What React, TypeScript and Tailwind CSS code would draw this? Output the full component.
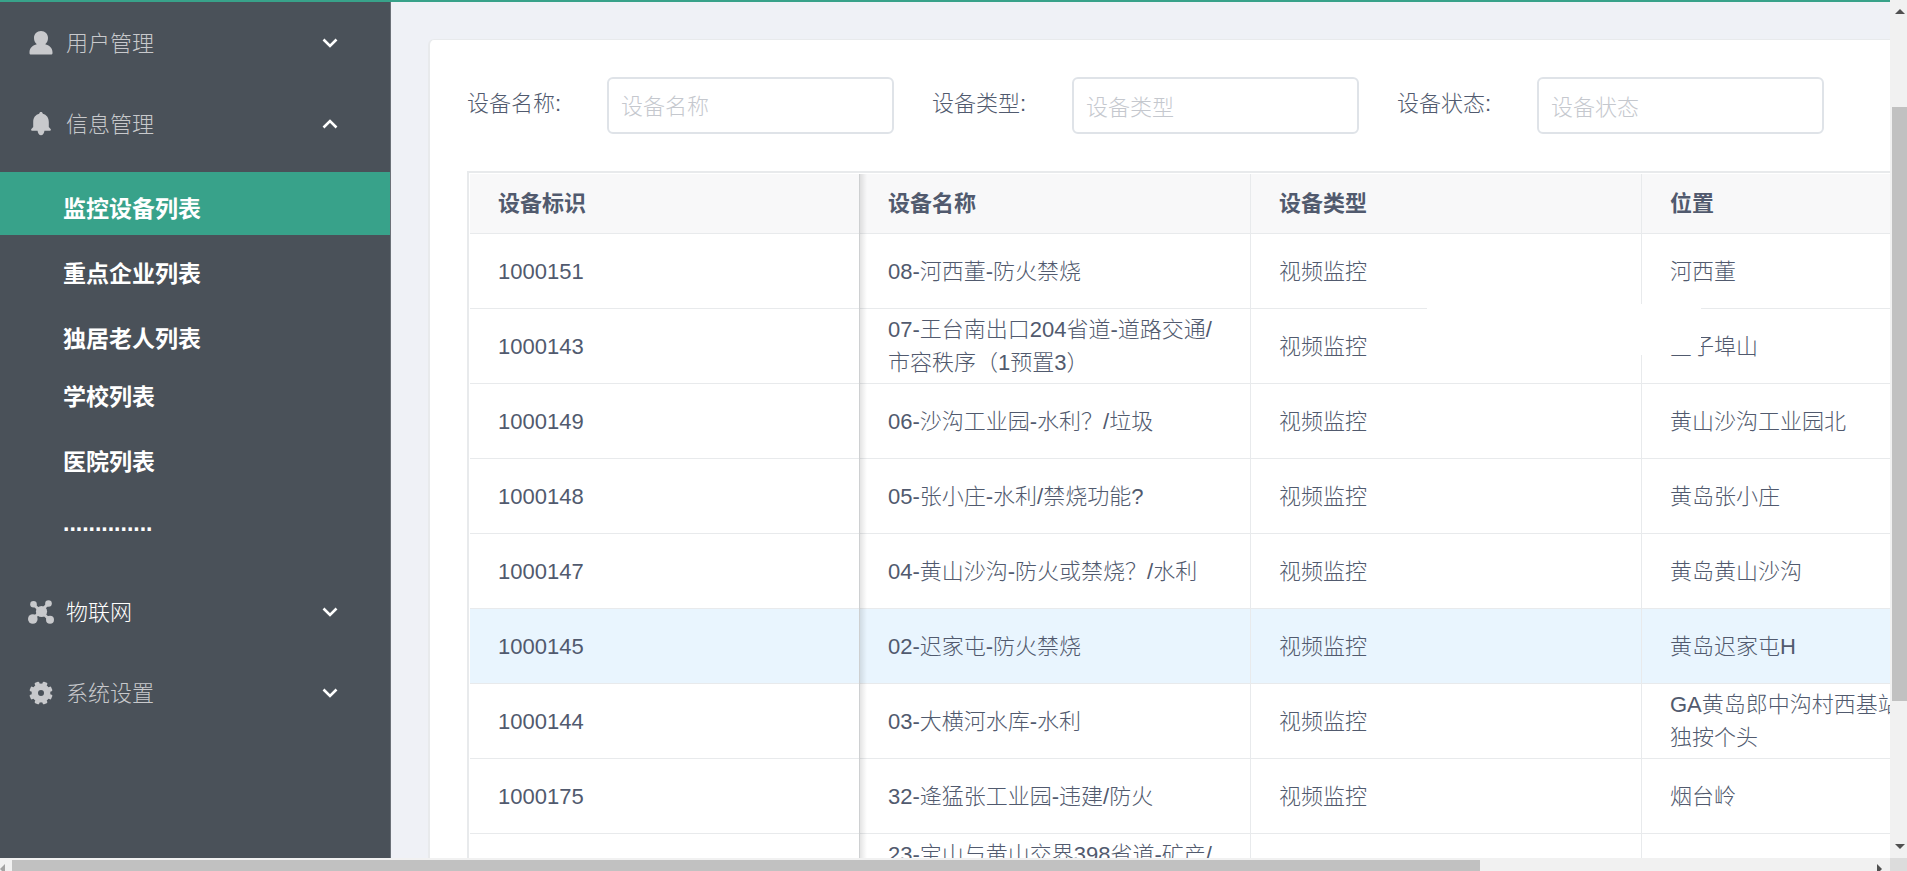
import React from 'react';

interface Device {
  id: string;
  name: string;
  type: string;
  location: string;
}

const devices: Device[] = [
  { id: '1000151', name: '08-河西董-防火禁烧', type: '视频监控', location: '河西董' },
  { id: '1000143', name: '07-王台南出口204省道-道路交通/市容秩序（1预置3）', type: '视频监控', location: '豆子埠山' },
  { id: '1000149', name: '06-沙沟工业园-水利？/垃圾', type: '视频监控', location: '黄山沙沟工业园北' },
  { id: '1000148', name: '05-张小庄-水利/禁烧功能?', type: '视频监控', location: '黄岛张小庄' },
  { id: '1000147', name: '04-黄山沙沟-防火或禁烧？/水利', type: '视频监控', location: '黄岛黄山沙沟' },
  { id: '1000145', name: '02-迟家屯-防火禁烧', type: '视频监控', location: '黄岛迟家屯H' },
  { id: '1000144', name: '03-大横河水库-水利', type: '视频监控', location: 'GA黄岛郎中沟村西基站\n独按个头' },
  { id: '1000175', name: '32-逄猛张工业园-违建/防火', type: '视频监控', location: '烟台岭' },
  { id: '', name: '23-宝山与黄山交界398省道-矿产/\n防火', type: '', location: '' },
];

const columns = ['设备标识', '设备名称', '设备类型', '位置'];

const subItems = [
  { label: '监控设备列表', className: 'h-[63px] pt-3 bg-[#38a28a]' },
  { label: '重点企业列表', className: 'h-[63px] pt-3' },
  { label: '独居老人列表', className: 'h-[63px] pt-3' },
  { label: '学校列表', className: 'h-14 pt-1' },
  { label: '医院列表', className: 'h-[63px] pt-3' },
  { label: '..............', className: 'h-[63px] pt-1' },
];

const filters = [
  { id: 'device-name', label: '设备名称', className: 'pt-0.5' },
  { id: 'device-type', label: '设备类型', className: 'pt-1' },
  { id: 'device-status', label: '设备状态', className: 'pt-1' },
];

const fixedShadow =
  "relative after:content-[''] after:absolute after:left-full after:top-0 after:-bottom-px after:w-2 after:bg-linear-to-r after:from-black/12 after:to-transparent";

const UserIcon = () => (
  <svg viewBox="0 0 24 24" className="w-6 h-6 shrink-0" fill="currentColor">
    <path d="M12 0c4.100 0 7 3 7 7 0 2.800-1.200 5-2.800 6.200 3.900 1.200 7.300 3.400 7.300 8V22c0 1-.6 1.500-1.500 1.500H2c-.9 0-1.500-.5-1.500-1.500v-.8c0-4.600 3.400-6.800 7.300-8C6.200 12 5 9.800 5 7c0-4 2.900-7 7-7z" />
  </svg>
);

const BellIcon = () => (
  <svg viewBox="0 0 24 24" className="w-6 h-6 shrink-0" fill="currentColor">
    <path d="M12 0c1 0 1.600.7 1.800 1.700 3.700.9 6 4 6 8.300v5l1.800 2.100c.6.700.3 1.600-.6 1.600H3c-.9 0-1.200-.9-.6-1.600L4.200 15v-5c0-4.300 2.300-7.400 6-8.300C10.400.7 11 0 12 0zM8.500 18.500h7c-.4 3-1.700 4.800-3.500 4.800s-3.100-1.800-3.500-4.800z" />
  </svg>
);

const NodesIcon = () => (
  <svg viewBox="0 0 26 24" className="w-[26px] h-6 shrink-0" fill="currentColor">
    <path d="M5.500 4.500L22 20M20.500 3.500L4.800 19" stroke="currentColor" strokeWidth="3" />
    <circle cx="13.500" cy="11.500" r="5.600" />
    <circle cx="5.500" cy="4.300" r="3.300" />
    <circle cx="20.500" cy="3.500" r="3.300" />
    <circle cx="4.800" cy="19" r="4.800" />
    <circle cx="22" cy="19.800" r="4" />
  </svg>
);

const GearIcon = () => (
  <svg viewBox="0 0 24 24" className="w-6 h-6 shrink-0">
    <circle cx="12" cy="12" r="6.200" fill="none" stroke="currentColor" strokeWidth="6.400" />
    {[22.5, 67.5, 112.5, 157.5, 202.5, 247.5, 292.5, 337.5].map((angle) => (
      <rect key={angle} x="9.600" y="0.400" width="4.800" height="5" rx="1" fill="currentColor" transform={`rotate(${angle} 12 12)`} />
    ))}
  </svg>
);

const Arrow: React.FC<{ up?: boolean }> = ({ up }) => (
  <svg viewBox="0 0 16 10" className="w-4 h-[10px] shrink-0 text-white" fill="none" stroke="currentColor" strokeWidth="2.600">
    <path d={up ? 'M1.500 8.500L8 2l6.500 6.500' : 'M1.500 1.500L8 8l6.500-6.500'} />
  </svg>
);

const MenuButton: React.FC<{ icon: React.ReactNode; label: string; open?: boolean; bright?: boolean }> = ({
  icon,
  label,
  open,
  bright,
}) => (
  <button
    type="button"
    className={`flex items-center w-full h-[81px] pl-7 pr-[52px] text-[22px] font-light ${bright ? 'text-white' : 'text-[#c8c9cc]'}`}
  >
    <span className="flex justify-center w-[26px] mr-3 text-[#c8c9cc]">{icon}</span>
    <span className="flex-1 pt-0.5 text-left">{label}</span>
    <Arrow up={open} />
  </button>
);

const Sidebar = () => (
  <nav className="w-[391px] shrink-0 bg-[#4a5159] border-r border-[#6b7178]">
    <MenuButton icon={<UserIcon />} label="用户管理" />
    <MenuButton icon={<BellIcon />} label="信息管理" open />
    <ul className="flex flex-col gap-0.5 mt-2 mb-[18px]">
      {subItems.map((item) => (
        <li key={item.label}>
          <a href="#" className={`flex items-center pl-[63px] text-[23px] font-bold text-white ${item.className}`}>
            {item.label}
          </a>
        </li>
      ))}
    </ul>
    <MenuButton icon={<NodesIcon />} label="物联网" bright />
    <MenuButton icon={<GearIcon />} label="系统设置" />
  </nav>
);

const Filters = () => (
  <form className="flex items-center gap-[38px]">
    {filters.map((f) => (
      <div key={f.id} className="flex items-center">
        <label htmlFor={f.id} className="w-[140px] pb-1 text-[22px] font-light">
          {f.label}:
        </label>
        <input
          id={f.id}
          type="text"
          placeholder={f.label}
          className={`w-[287px] h-[57px] px-3 text-[22px] font-light border-2 border-[#dfe3e8] rounded-md placeholder:text-[#c5c8ce] ${f.className}`}
        />
      </div>
    ))}
  </form>
);

const DeviceTable = () => (
  <div className="relative mt-[37px] border-l-2 border-t-2 border-[#e8eaec] pl-px pt-px">
    <table className="w-[1954px] table-fixed border-separate border-spacing-0 text-[22px]">
      <colgroup>
        <col className="w-[390px]" />
        <col className="w-[391px]" />
        <col className="w-[391px]" />
        <col className="w-[391px]" />
        <col className="w-[391px]" />
      </colgroup>
      <thead>
        <tr className="h-[60px] bg-[#f8f8f9]">
          {columns.map((c, i) => (
            <th key={c} className={`px-7 text-left font-bold border-r border-b border-[#e8eaec] ${i === 0 ? fixedShadow : ''}`}>
              {c}
            </th>
          ))}
          <th className="border-b border-[#e8eaec]" />
        </tr>
      </thead>
      <tbody>
        {devices.map((d) => (
          <tr key={d.name} className={`h-[75px] leading-[33px] font-light ${d.id === '1000145' ? 'bg-[#e9f5fe]' : 'bg-white'}`}>
            <td className={`px-7 border-r border-b border-[#e8eaec] ${fixedShadow}`}>{d.id}</td>
            <td className="px-7 border-r border-b border-[#e8eaec] whitespace-pre-line">{d.name}</td>
            <td className="px-7 border-r border-b border-[#e8eaec]">{d.type}</td>
            <td className="px-7 border-r border-b border-[#e8eaec] whitespace-pre-line">{d.location}</td>
            <td className="border-b border-[#e8eaec]" />
          </tr>
        ))}
      </tbody>
    </table>
    <div className="absolute left-[958px] top-[131px] w-[274px] h-[51px] bg-white" />
  </div>
);

const VerticalBar = () => (
  <div className="flex flex-col items-center w-[17px] shrink-0 bg-[#f1f1f1] pl-[2px]">
    <svg viewBox="0 0 10 5" className="w-[10px] h-[5px] mt-[9px] text-[#505050]" fill="currentColor">
      <path d="M0 5l5-5 5 5z" />
    </svg>
    <div className="w-full mt-[93px] h-[594px] bg-[#c1c1c1]" />
    <svg viewBox="0 0 10 5" className="w-[10px] h-[5px] mt-auto mb-[9px] text-[#505050]" fill="currentColor">
      <path d="M0 0l5 5 5-5z" />
    </svg>
  </div>
);

const HorizontalBar = () => (
  <div className="flex items-end h-[13px] shrink-0 bg-[#f1f1f1]">
    <svg viewBox="0 0 5 7" className="w-[5px] h-[7px] text-[#a3a3a3]" fill="currentColor">
      <path d="M5 0v10L0 5z" />
    </svg>
    <div className="ml-[7px] w-[77%] h-[11px] bg-[#c1c1c1]" />
    <svg viewBox="0 0 5 7" className="w-[5px] h-[7px] ml-auto mr-2 text-[#505050]" fill="currentColor">
      <path d="M0 0v10l5-5z" />
    </svg>
    <div className="w-[17px] h-full bg-[#dcdcdc]" />
  </div>
);

const App: React.FC = () => {
  return (
    <div className="flex flex-col h-screen overflow-hidden bg-[#eff1f6] text-[#515a6e] font-['Liberation_Sans','Noto_Sans_CJK_SC',sans-serif]">
      <div className="flex flex-1 min-h-0">
        <div className="flex flex-1 min-w-0 border-t-2 border-[#38a28a]">
          <Sidebar />
          <main className="flex-1 min-w-0 overflow-hidden pl-[37px] pt-[37px]">
            <section className="min-w-max border-l-2 border-t border-[#e8eaec] rounded-tl-md bg-white pl-[37px] pt-[37px]">
              <Filters />
              <DeviceTable />
            </section>
          </main>
        </div>
        <VerticalBar />
      </div>
      <HorizontalBar />
    </div>
  );
};

export default App;
